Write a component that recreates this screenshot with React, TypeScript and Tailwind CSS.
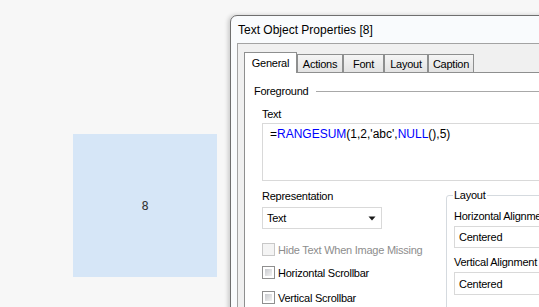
import React from "react";

const Tab = ({ label, width, active }: { label: string; width: string; active?: boolean }) => (
  <div
    className={
      active
        ? `relative z-10 -mb-px flex h-[21px] items-center justify-center border border-b-0 border-[#8e8f8f] bg-white ${width}`
        : `flex h-[18px] items-center justify-center border border-b-0 border-[#8e8f8f] bg-gradient-to-b from-[#f5f5f5] to-[#e3e3e3] ${width}`
    }
  >
    {label}
  </div>
);

const Checkbox = ({ label, disabled }: { label: string; disabled?: boolean }) => (
  <div className="flex h-[13px] items-center gap-[3px]">
    {disabled ? (
      <div className="h-[13px] w-[13px] shrink-0 border border-[#c8c8c8] bg-[#f4f4f4]" />
    ) : (
      <div className="h-[13px] w-[13px] shrink-0 border border-[#8f8f8f] bg-white p-[2px]">
        <div className="h-full w-full bg-gradient-to-br from-[#c9cbcf] to-[#f3f3f3]" />
      </div>
    )}
    <span className={disabled ? "text-[#8d8d8d]" : "text-black"}>{label}</span>
  </div>
);

const Select = ({ value, className }: { value: string; className: string }) => (
  <div className={`flex items-center justify-between border border-[#d9d9d9] bg-white pl-[4px] pr-[5px] ${className}`}>
    <span>{value}</span>
    <svg width="8" height="5" viewBox="0 0 8 5" className="shrink-0">
      <path d="M0.5 0.5h7L4 4.5z" fill="#1a1a1a" />
    </svg>
  </div>
);

export default function App() {
  return (
    <div className="flex h-[307px] w-[539px] items-start overflow-hidden bg-[#f7f7f7] font-['Liberation_Sans',Arial,sans-serif]">
      <div className="ml-[73px] mt-[134px] flex h-[143px] w-[144px] shrink-0 items-center justify-center bg-[#d6e6f7] font-['DejaVu_Sans_Mono',monospace] text-[12px] text-[#333]">
        8
      </div>

      <div className="ml-[13px] mt-[15px] w-[420px] shrink-0 rounded-t-[7px] border border-[#6f6f6f] bg-[#f9fbfd] px-[6px] shadow-[-2px_0_4px_rgba(0,0,0,0.18)]">
        <div className="flex h-[27px] items-center pl-[1px] text-[12px] text-black">Text Object Properties [8]</div>

        <div className="h-[300px] border border-[#a3a3a3] bg-[#f0f0f0] pl-[6px] pt-[8px] text-[11px] leading-[14px] tracking-[-0.25px] text-black">
          <div className="flex items-end">
            <Tab label="General" width="w-[53px]" active />
            <Tab label="Actions" width="w-[46px]" />
            <Tab label="Font" width="w-[41px]" />
            <Tab label="Layout" width="w-[44px]" />
            <Tab label="Caption" width="w-[46px]" />
          </div>

          <div className="h-[260px] border border-[#8e8f8f] bg-white pl-[9px] pt-[11px]">
            <div className="flex h-[14px] items-center">
              <span>Foreground</span>
              <div className="ml-[8px] h-px flex-1 bg-[#a8a8a8]" />
            </div>

            <div className="ml-[8px]">
              <div className="mt-[9px]">Text</div>
              <div className="mt-[2px] h-[58px] border border-[#d9d9d9] pl-[7px] pt-[3px] text-[12px] tracking-normal">
                <span>=</span>
                <span className="text-[#0000ff]">RANGESUM</span>
                <span>(1,2,'abc',</span>
                <span className="text-[#0000ff]">NULL</span>
                <span>(),5)</span>
              </div>

              <div className="mt-[8px] flex">
                <div className="w-[184px] shrink-0">
                  <div>Representation</div>
                  <Select value="Text" className="mt-[4px] h-[22px] w-[120px]" />
                  <div className="mt-[14px]">
                    <Checkbox label="Hide Text When Image Missing" disabled />
                  </div>
                  <div className="mt-[10px]">
                    <Checkbox label="Horizontal Scrollbar" />
                  </div>
                  <div className="mt-[12px]">
                    <Checkbox label="Vertical Scrollbar" />
                  </div>
                </div>

                <div className="relative mt-[6px] h-[130px] w-[200px] shrink-0 rounded-[3px] border border-[#d5dadf] pl-[7px] pt-[13px]">
                  <span className="absolute -top-[8px] left-[6px] bg-white px-[1px]">Layout</span>
                  <div>Horizontal Alignment</div>
                  <div className="mt-[3px] flex h-[22px] items-center border border-[#d9d9d9] bg-white pl-[4px]">Centered</div>
                  <div className="mt-[7px]">Vertical Alignment</div>
                  <div className="mt-[3px] flex h-[23px] items-center border border-[#d9d9d9] bg-white pl-[4px]">Centered</div>
                </div>
              </div>
            </div>
          </div>
        </div>
      </div>
    </div>
  );
}
